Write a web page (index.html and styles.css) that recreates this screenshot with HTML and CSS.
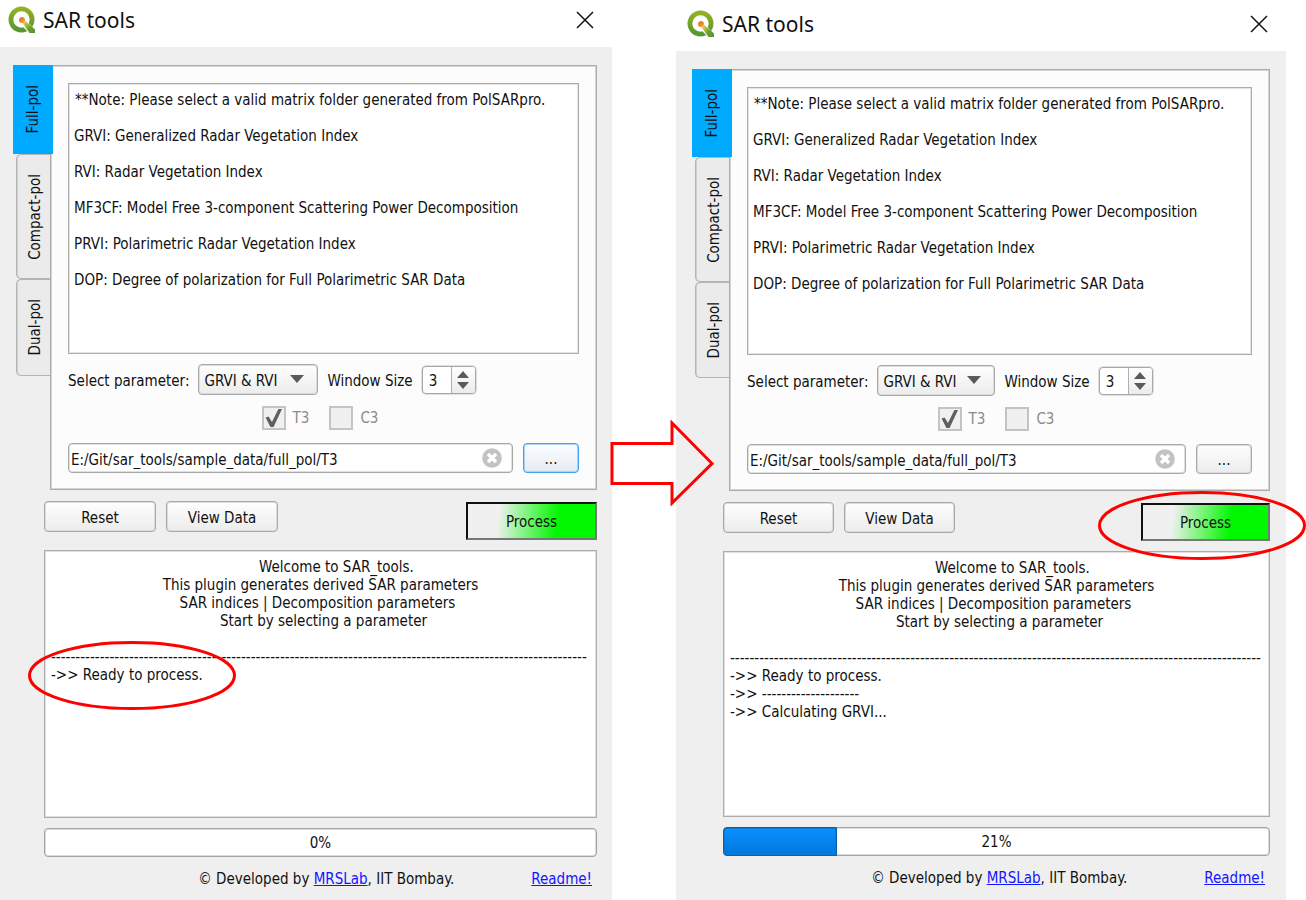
FILE: index.html
```html
<!DOCTYPE html>
<html lang="en">
<head>
<meta charset="utf-8">
<title>SAR tools</title>
<link rel="stylesheet" href="styles.css">
</head>
<body>
<svg class="defs" aria-hidden="true">
  <defs>
    <linearGradient id="leaf" x1="0" y1="0" x2="0" y2="1"><stop offset="0" stop-color="#93b023"/><stop offset="1" stop-color="#589632"/></linearGradient>
    <linearGradient id="tail" gradientUnits="userSpaceOnUse" x1="11" y1="11" x2="26" y2="26"><stop offset="0" stop-color="#ee7913"/><stop offset=".25" stop-color="#ee8a30"/><stop offset=".36" stop-color="#e6c860"/><stop offset=".5" stop-color="#a9c340"/><stop offset=".7" stop-color="#6ca02e"/><stop offset="1" stop-color="#589632"/></linearGradient>
    <symbol id="logo" viewBox="0 0 28 28">
      <circle cx="13.5" cy="13.5" r="10.600" fill="none" stroke="url(#leaf)" stroke-width="4.800"/>
      <path d="M15 16L24.500 26" stroke="#fff" stroke-width="6.500"/>
      <path d="M13.500 11C15.500 10.500 17.500 12.500 17 14.500L27 23.500V27H21.500L14.500 17C12.500 17.500 10.800 16 11 14C11 12.500 12 11.300 13.500 11Z" fill="url(#tail)"/>
    </symbol>
    <symbol id="close" viewBox="0 0 18 18"><path d="M1 1L17 17M17 1L1 17" stroke="#111" stroke-width="1.500" fill="none"/></symbol>
    <symbol id="clear" viewBox="0 0 20 20"><circle cx="10" cy="10" r="9.800" fill="#c3c3c3"/><path d="M6 6L14 14M14 6L6 14" stroke="#fff" stroke-width="3.400"/></symbol>
    <symbol id="down" viewBox="0 0 14 8"><path d="M0 0H14L7 8Z" fill="#5a5a5a"/></symbol>
    <symbol id="up" viewBox="0 0 14 8"><path d="M7 0L14 8H0Z" fill="#5a5a5a"/></symbol>
  </defs>
</svg>
<main class="stage">
  <section class="dialog dialog-ready">
    <header class="titlebar">
      <svg class="logo"><use href="#logo"/></svg>
      <h1 class="title">SAR tools</h1>
      <button class="close" aria-label="Close"><svg><use href="#close"/></svg></button>
    </header>
    <div class="body">
      <div class="tabs">
        <div class="tablist" role="tablist">
          <button class="tab tab-full active" role="tab" aria-selected="true"><span>Full-pol</span></button>
          <button class="tab tab-compact" role="tab"><span>Compact-pol</span></button>
          <button class="tab tab-dual" role="tab"><span>Dual-pol</span></button>
        </div>
        <div class="frame" role="tabpanel">
          <div class="note">
            <p class="lead">**Note: Please select a valid matrix folder generated from PolSARpro.</p>
            <p>GRVI: Generalized Radar Vegetation Index</p>
            <p>RVI: Radar Vegetation Index</p>
            <p>MF3CF: Model Free 3-component Scattering Power Decomposition</p>
            <p>PRVI: Polarimetric Radar Vegetation Index</p>
            <p>DOP: Degree of polarization for Full Polarimetric SAR Data</p>
          </div>
          <div class="params">
            <label for="param-a">Select parameter:</label>
            <div class="combo"><select id="param-a"><option>GRVI &amp; RVI</option></select><svg class="arrow"><use href="#down"/></svg></div>
            <label for="size-a">Window Size</label>
            <div class="spin"><input id="size-a" type="number" value="3"><div class="steps"><button aria-label="Increase"><svg><use href="#up"/></svg></button><button aria-label="Decrease"><svg><use href="#down"/></svg></button></div></div>
          </div>
          <div class="checks">
            <label><input type="checkbox" checked disabled>T3</label>
            <label><input type="checkbox" disabled>C3</label>
          </div>
          <div class="folder">
            <div class="path"><input type="text" aria-label="Matrix folder" value="E:/Git/sar_tools/sample_data/full_pol/T3"><button class="clear" aria-label="Clear"><svg><use href="#clear"/></svg></button></div>
            <button class="btn browse focused">...</button>
          </div>
        </div>
      </div>
      <div class="lower">
        <div class="actions">
          <button class="btn">Reset</button>
          <button class="btn">View Data</button>
          <div class="run"><button class="process">Process</button></div>
        </div>
        <div class="log">
          <div class="welcome">
            <p class="greeting">Welcome to SAR_tools.</p>
            <p>This plugin generates derived SAR parameters</p>
            <p class="topics">SAR indices | Decomposition parameters</p>
            <p class="hint">Start by selecting a parameter</p>
          </div>
          <p>--------------------------------------------------------------------------------------------------------------</p>
          <p class="ready">-&gt;&gt; Ready to process.<svg class="ring ring-log" viewBox="0 0 208 69"><ellipse cx="104" cy="34.500" rx="102.500" ry="33"/></svg></p>
        </div>
        <div class="progress" role="progressbar" aria-valuenow="0"><span class="percent">0%</span></div>
        <footer class="footer"><p>© Developed by <a href="#">MRSLab</a>, IIT Bombay.</p><a href="#">Readme!</a></footer>
      </div>
    </div>
  </section>

  <section class="dialog dialog-running">
    <svg class="flow" viewBox="0 0 104 86"><path d="M2 23.500H62V3L102 43.500L62 83V63.500H2Z"/></svg>
    <header class="titlebar">
      <svg class="logo"><use href="#logo"/></svg>
      <h1 class="title">SAR tools</h1>
      <button class="close" aria-label="Close"><svg><use href="#close"/></svg></button>
    </header>
    <div class="body">
      <div class="tabs">
        <div class="tablist" role="tablist">
          <button class="tab tab-full active" role="tab" aria-selected="true"><span>Full-pol</span></button>
          <button class="tab tab-compact" role="tab"><span>Compact-pol</span></button>
          <button class="tab tab-dual" role="tab"><span>Dual-pol</span></button>
        </div>
        <div class="frame" role="tabpanel">
          <div class="note">
            <p class="lead">**Note: Please select a valid matrix folder generated from PolSARpro.</p>
            <p>GRVI: Generalized Radar Vegetation Index</p>
            <p>RVI: Radar Vegetation Index</p>
            <p>MF3CF: Model Free 3-component Scattering Power Decomposition</p>
            <p>PRVI: Polarimetric Radar Vegetation Index</p>
            <p>DOP: Degree of polarization for Full Polarimetric SAR Data</p>
          </div>
          <div class="params">
            <label for="param-b">Select parameter:</label>
            <div class="combo"><select id="param-b"><option>GRVI &amp; RVI</option></select><svg class="arrow"><use href="#down"/></svg></div>
            <label for="size-b">Window Size</label>
            <div class="spin"><input id="size-b" type="number" value="3"><div class="steps"><button aria-label="Increase"><svg><use href="#up"/></svg></button><button aria-label="Decrease"><svg><use href="#down"/></svg></button></div></div>
          </div>
          <div class="checks">
            <label><input type="checkbox" checked disabled>T3</label>
            <label><input type="checkbox" disabled>C3</label>
          </div>
          <div class="folder">
            <div class="path"><input type="text" aria-label="Matrix folder" value="E:/Git/sar_tools/sample_data/full_pol/T3"><button class="clear" aria-label="Clear"><svg><use href="#clear"/></svg></button></div>
            <button class="btn browse">...</button>
          </div>
        </div>
      </div>
      <div class="lower">
        <div class="actions">
          <button class="btn">Reset</button>
          <button class="btn">View Data</button>
          <div class="run"><button class="process">Process</button><svg class="ring ring-run" viewBox="0 0 208 69"><ellipse cx="104" cy="34.500" rx="102.500" ry="33"/></svg></div>
        </div>
        <div class="log">
          <div class="welcome">
            <p class="greeting">Welcome to SAR_tools.</p>
            <p>This plugin generates derived SAR parameters</p>
            <p class="topics">SAR indices | Decomposition parameters</p>
            <p class="hint">Start by selecting a parameter</p>
          </div>
          <p>-------------------------------------------------------------------------------------------------------------</p>
          <p>-&gt;&gt; Ready to process.</p>
          <p>-&gt;&gt; --------------------</p>
          <p>-&gt;&gt; Calculating GRVI...</p>
        </div>
        <div class="progress" role="progressbar" aria-valuenow="21"><span class="bar" style="width:21%"></span><span class="percent">21%</span></div>
        <footer class="footer"><p>© Developed by <a href="#">MRSLab</a>, IIT Bombay.</p><a href="#">Readme!</a></footer>
      </div>
    </div>
  </section>
</main>
</body>
</html>
```
FILE: styles.css
```css
* { box-sizing: border-box; }
body { margin: 0; background: #fff; color: #111; font: 15px/18px "DejaVu Sans Condensed", "DejaVu Sans", sans-serif; }
p, h1 { margin: 0; }
button, input, select { font: inherit; color: inherit; margin: 0; padding: 0; }
button { border: 0; background: none; }
svg { display: block; }
a { color: #1414ff; text-decoration: underline; }
.defs { position: absolute; width: 0; height: 0; }

.stage { display: grid; grid-template-columns: 612fr 610fr; column-gap: 64px; padding-right: 20px; min-height: 100vh; }
.dialog { position: relative; display: flex; flex-direction: column; min-width: 0; --inset: 13px; --inset-end: 15px; --bar: 47px; --note: 271px; --log: 268px; --combo: 120px; --process: 131px; --btn: 112px; }
.dialog-running { --inset: 16px; --inset-end: 16px; --bar: 51px; --note: 268px; --log: 266px; --combo: 118px; --process: 129px; --btn: 111px; }

.titlebar { display: flex; align-items: center; min-height: var(--bar); padding: 0 18px 7px calc(var(--inset) - 5px); }
.dialog-running .titlebar { padding-bottom: 3px; }
.logo { width: 28px; height: 28px; }
.title { margin-left: 7px; font: 400 21px/28px "Noto Sans", sans-serif; }
.close { margin-left: auto; }
.close svg { width: 18px; height: 18px; }

.body { flex: 1; background: #efefef; padding: 18px var(--inset-end) 12px var(--inset); }
.tabs { display: flex; align-items: stretch; }
.tablist { display: flex; flex-direction: column; width: 37px; flex: none; }
.tab { display: flex; align-items: center; justify-content: center; position: relative; margin: 0 0 0 3px; padding-left: 2px; border: 1px solid #b4b4b4; border-width: 1px 0 1px 1px; border-radius: 5px 0 0 5px; background: #ebebeb; box-shadow: inset 1px 0 #d0d0d0; }
.tab span { writing-mode: vertical-rl; transform: rotate(180deg); }
.tab.active { margin: 0 -3px 0 0; padding: 0; border: 0; border-radius: 0; background: #00aaff; box-shadow: none; }
.tab-full { height: 89px; }
.tab-compact { height: 125px; }
.tab-dual { height: 97px; }
.dialog-running .tab-full { height: 88px; }
.dialog-running .tab-dual { height: 96px; }

.frame { flex: 1; min-width: 0; border: 1px solid #acacac; box-shadow: inset 0 0 0 1px #d4d4d4; background: #fcfcfc; padding: 17px 17px 16px; }
.note { min-height: var(--note); border: 1px solid #acacac; box-shadow: inset 0 0 0 1px #e4e4e4; background: #fff; padding: 7px 5px; display: flex; flex-direction: column; gap: 18px; white-space: nowrap; }
.lead { padding-left: 1px; }
.params { display: flex; align-items: center; gap: 9px; margin-top: 10px; white-space: nowrap; }
.params label { padding-top: 3px; }
.combo { position: relative; width: var(--combo); }
.combo select { appearance: none; display: block; width: 100%; height: 31px; padding: 2px 5px 0; border: 1px solid #a8a8a8; box-shadow: inset 0 0 0 1px #dcdcdc; border-radius: 4px; background: linear-gradient(#fefefe, #ececec); }
.arrow { position: absolute; right: 14px; top: 11px; width: 14px; height: 8px; pointer-events: none; }
.spin { display: flex; width: 54px; height: 28px; border: 1px solid #a8a8a8; box-shadow: 0 0 0 1px #e0e0e0; border-radius: 4px; background: #fff; overflow: hidden; }
.spin input { flex: 1; min-width: 0; border: 0; padding: 2px 0 0 6px; background: none; appearance: textfield; }
.spin input::-webkit-inner-spin-button { appearance: none; }
.steps { display: flex; flex-direction: column; justify-content: center; align-items: center; gap: 4px; width: 24px; border-left: 1px solid #b0b0b0; background: linear-gradient(#fefefe, #ececec); }
.steps svg { width: 12px; height: 7px; }
.checks { display: flex; justify-content: center; gap: 20px; margin-top: 11px; padding-right: 7px; color: #8a8a8a; }
.checks label { display: flex; align-items: center; gap: 7px; }
.checks input { appearance: none; width: 24px; height: 24px; border: 2px solid #c4c4c4; background: #f0f0f0; }
.checks input:checked::before { content: ""; display: block; width: 20px; height: 20px; background: #606060; clip-path: polygon(10% 48%, 25% 42%, 42% 70%, 74% 5%, 92% 5%, 50% 95%, 34% 95%); }
.folder { display: flex; gap: 10px; margin-top: 13px; }
.path { flex: 1; min-width: 0; display: flex; align-items: center; height: 30px; border: 1px solid #a8a8a8; box-shadow: inset 0 0 0 1px #e0e0e0; border-radius: 4px; background: #fff; padding: 0 10px 0 2px; }
.path input { flex: 1; min-width: 0; border: 0; padding-top: 3px; background: none; }
.clear svg { width: 20px; height: 20px; }
.btn { width: var(--btn); height: 31px; padding-top: 2px; border: 1px solid #a8a8a8; box-shadow: inset 0 0 0 1px #dcdcdc; border-radius: 4px; background: linear-gradient(#fefefe, #ececec); }
.browse { width: 56px; height: 30px; }
.focused { border-color: #3fa4f6; box-shadow: inset 0 0 0 1px #a8d4fa; background: linear-gradient(#fbfdff, #e6ebf0); }

.lower { margin: 11px 0 0 31px; }
.actions { display: flex; gap: 10px; }
.run { position: relative; margin-left: auto; padding-top: 1px; }
.process { width: var(--process); height: 38px; padding-top: 2px; border: 2px solid #777; border-top-color: #111; border-left-color: #111; background: linear-gradient(97deg, #f0f0f0 24%, #00f800 70%); }
.log { min-height: var(--log); margin-top: 10px; border: 1px solid #acacac; box-shadow: inset 0 0 0 1px #e0e0e0; background: #fff; padding: 7px 6px; white-space: nowrap; }
.welcome { text-align: center; margin-bottom: 18px; }
.greeting { padding-left: 32px; }
.topics { padding-right: 6px; }
.hint { padding-left: 6px; }
.ready { position: relative; }
.progress { position: relative; display: flex; align-items: center; justify-content: center; height: 29px; margin-top: 10px; border: 1px solid #a4a4a4; box-shadow: inset 0 0 0 1px #dcdcdc; border-radius: 4px; background: #fff; }
.bar { position: absolute; left: -1px; top: -1px; bottom: -1px; border: 1px solid #0660ae; border-radius: 4px 0 0 4px; background: linear-gradient(#0a90ff, #0078dc); box-shadow: inset 0 0 0 1px #0c78d0; }
.footer { display: flex; justify-content: flex-end; gap: 77px; margin-top: 13px; padding-right: 5px; }

.ring { position: absolute; width: 208px; height: 69px; fill: none; stroke: #f00; stroke-width: 3; pointer-events: none; }
.ring-log { left: -23px; top: -25px; }
.ring-run { right: -36px; top: -11px; }
.flow { position: absolute; left: -66px; top: 420px; width: 104px; height: 86px; fill: none; stroke: #f00; stroke-width: 3; z-index: 2; }
```
